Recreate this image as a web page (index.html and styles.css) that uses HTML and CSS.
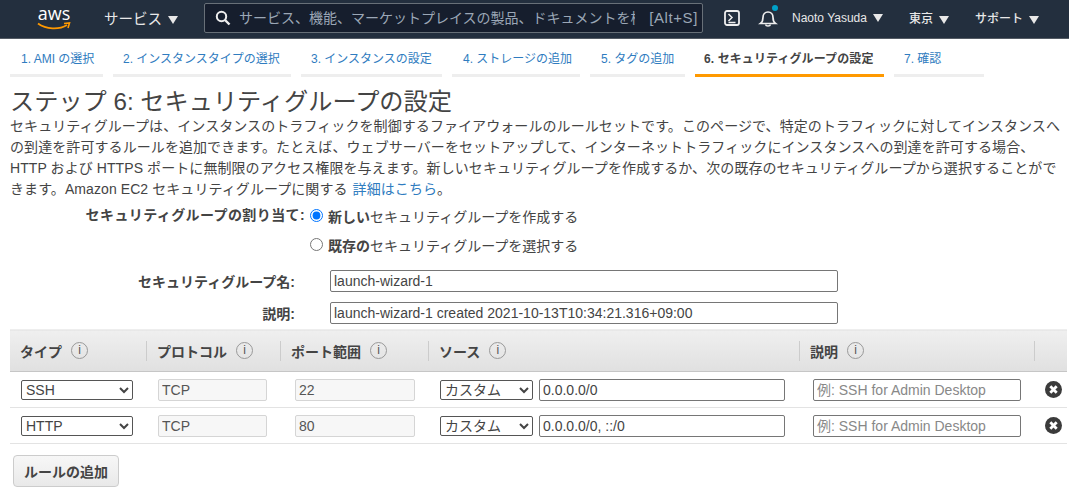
FILE: index.html
```html
<!DOCTYPE html>
<html lang="ja">
<head>
  <meta charset="UTF-8" />
  <title>ステップ 6: セキュリティグループの設定</title>
  <link rel="stylesheet" href="styles.css">
</head>
<body>
  <header class="topbar">
    <div class="logo">
      <span class="logo-text">aws</span>
      <svg class="logo-smile" width="34" height="9" viewBox="0 0 34 9"><path d="M1 1.500C9 7.500 22 8 30 3" fill="none" stroke="#f90" stroke-width="1.800"/><path d="M27 1.500L32.500 1L31 6" fill="none" stroke="#f90" stroke-width="1.600"/></svg>
    </div>
    <div class="nav-item services">サービス <span class="caret"></span></div>
    <div class="search">
      <svg width="16" height="16" viewBox="0 0 16 16"><circle cx="6.500" cy="6.500" r="4.700" fill="none" stroke="#eee" stroke-width="2"/><path d="M10 10l4.500 4.500" stroke="#eee" stroke-width="2.400"/></svg>
      <input class="search-input" type="text" placeholder="サービス、機能、マーケットプレイスの製品、ドキュメントを検索">
      <span class="search-key">[Alt+S]</span>
    </div>
    <svg class="icon-shell" width="16" height="16" viewBox="0 0 16 16"><rect x="1" y="1" width="14" height="14" rx="2" fill="none" stroke="#eee" stroke-width="1.800"/><path d="M4.500 4L8 7.500L4.500 11M4.500 12.500h7" fill="none" stroke="#eee" stroke-width="1.500"/></svg>
    <div class="bell">
      <svg width="20" height="20" viewBox="0 0 20 20"><path d="M2.500 15.500c2-1.500 2.500-3 2.500-6c0-3 2-5.500 5-5.500s5 2.500 5 5.500c0 3 .5 4.500 2.500 6z" fill="none" stroke="#eee" stroke-width="1.700"/><path d="M7.500 16.500c.5 2 4.500 2 5 0" fill="none" stroke="#eee" stroke-width="1.500"/></svg>
      <span class="bell-dot"></span>
    </div>
    <div class="nav-item small user">Naoto Yasuda <span class="caret"></span></div>
    <div class="nav-item small region">東京 <span class="caret"></span></div>
    <div class="nav-item small support">サポート <span class="caret"></span></div>
  </header>

  <nav class="tabs">
    <a class="tab t1">1. AMI の選択</a>
    <a class="tab t2">2. インスタンスタイプの選択</a>
    <a class="tab t3">3. インスタンスの設定</a>
    <a class="tab t4">4. ストレージの追加</a>
    <a class="tab t5">5. タグの追加</a>
    <a class="tab t6 active">6. セキュリティグループの設定</a>
    <a class="tab t7">7. 確認</a>
  </nav>

  <main class="content">
    <h1>ステップ 6: セキュリティグループの設定</h1>
    <p class="intro">セキュリティグループは、インスタンスのトラフィックを制御するファイアウォールのルールセットです。このページで、特定のトラフィックに対してインスタンスへの到達を許可するルールを追加できます。たとえば、ウェブサーバーをセットアップして、インターネットトラフィックにインスタンスへの到達を許可する場合、HTTP および HTTPS ポートに無制限のアクセス権限を与えます。新しいセキュリティグループを作成するか、次の既存のセキュリティグループから選択することができます。Amazon EC2 セキュリティグループに関する <a href="#">詳細はこちら</a>。</p>

    <div class="assign">
      <div class="assign-label">セキュリティグループの割り当て:</div>
      <div class="assign-options">
        <label class="radio"><input type="radio" name="sg" checked> <span><b>新しい</b>セキュリティグループを作成する</span></label>
        <label class="radio"><input type="radio" name="sg"> <span><b>既存の</b>セキュリティグループを選択する</span></label>
      </div>
    </div>

    <div class="field first">
      <label class="field-label">セキュリティグループ名:</label>
      <input class="text wide" type="text" value="launch-wizard-1">
    </div>
    <div class="field last">
      <label class="field-label">説明:</label>
      <input class="text wide" type="text" value="launch-wizard-1 created 2021-10-13T10:34:21.316+09:00">
    </div>

    <table class="rules">
      <thead>
        <tr>
          <th class="c-type"><span class="th-in">タイプ <i class="info">i</i></span></th>
          <th class="c-proto"><span class="th-in">プロトコル <i class="info">i</i></span></th>
          <th class="c-port"><span class="th-in">ポート範囲 <i class="info">i</i></span></th>
          <th class="c-source"><span class="th-in">ソース <i class="info">i</i></span></th>
          <th class="c-desc"><span class="th-in">説明 <i class="info">i</i></span></th>
          <th class="c-del"><span class="th-in"></span></th>
        </tr>
      </thead>
      <tbody>
        <tr>
          <td class="c-type"><select class="type-select"><option>SSH</option></select></td>
          <td class="c-proto"><input class="text ro proto" type="text" value="TCP" readonly></td>
          <td class="c-port"><input class="text ro port" type="text" value="22" readonly></td>
          <td class="c-source"><div class="source"><select class="source-select"><option>カスタム</option></select><input class="text cidr" type="text" value="0.0.0.0/0"></div></td>
          <td class="c-desc"><input class="text desc" type="text" placeholder="例: SSH for Admin Desktop"></td>
          <td class="c-del"><span class="del"><svg width="17" height="17" viewBox="0 0 17 17"><circle cx="8.500" cy="8.500" r="8.500" fill="#3b3b3b"/><path d="M5.300 5.300l6.400 6.400M11.700 5.300l-6.400 6.400" stroke="#fff" stroke-width="2.800"/></svg></span></td>
        </tr>
        <tr>
          <td class="c-type"><select class="type-select"><option>HTTP</option></select></td>
          <td class="c-proto"><input class="text ro proto" type="text" value="TCP" readonly></td>
          <td class="c-port"><input class="text ro port" type="text" value="80" readonly></td>
          <td class="c-source"><div class="source"><select class="source-select"><option>カスタム</option></select><input class="text cidr" type="text" value="0.0.0.0/0, ::/0"></div></td>
          <td class="c-desc"><input class="text desc" type="text" placeholder="例: SSH for Admin Desktop"></td>
          <td class="c-del"><span class="del"><svg width="17" height="17" viewBox="0 0 17 17"><circle cx="8.500" cy="8.500" r="8.500" fill="#3b3b3b"/><path d="M5.300 5.300l6.400 6.400M11.700 5.300l-6.400 6.400" stroke="#fff" stroke-width="2.800"/></svg></span></td>
        </tr>
      </tbody>
    </table>

    <button class="add-rule">ルールの追加</button>
  </main>
</body>
</html>
```
FILE: styles.css
```css
* {
  box-sizing: border-box;
}

body {
  font-family: "Liberation Sans", "Noto Sans CJK JP", sans-serif;
  font-size: 14px;
  color: #444;
  margin: 0;
  background: #fff;
  overflow: hidden;
}

/* top bar */
.topbar {
  display: flex;
  align-items: center;
  height: 39px;
  padding-bottom: 3px;
  background: #232f3e;
  border-bottom: 1px solid #545b64;
  color: #eee;
}

.logo {
  width: 34px;
  margin-left: 37px;
  height: 30px;
  display: flex;
  flex-direction: column;
  align-items: center;
}

.logo-text {
  font-family: "Open Sans", sans-serif;
  font-size: 18px;
  line-height: 20px;
  color: #fff;
}

.logo-smile {
  margin-top: -1px;
  flex: none;
}

.nav-item {
  white-space: nowrap;
  color: #e8e8e8;
}

.services {
  font-size: 14.500px;
  margin-left: 33px;
  width: 100px;
}

.small {
  font-size: 12px;
  font-weight: 500;
}

.caret {
  display: inline-block;
  width: 0;
  height: 0;
  margin-left: 3px;
  border-left: 5px solid transparent;
  border-right: 5px solid transparent;
  border-top: 8px solid #e8e8e8;
  vertical-align: middle;
}

.services .caret {
  margin-left: 2px;
}

.search {
  display: flex;
  align-items: center;
  width: 499px;
  height: 30px;
  background: #161e2d;
  border: 1px solid #687078;
  border-radius: 2px;
  padding: 0 4px 0 10px;
}

.search-input {
  flex: 1;
  min-width: 0;
  margin-left: 8px;
  padding: 0;
  border: none;
  outline: none;
  background: transparent;
  font: 14px "Liberation Sans", "Noto Sans CJK JP", sans-serif;
}

.search-input::placeholder {
  color: #9ba7b6;
  opacity: 1;
}

.search-key {
  margin-left: 14px;
  color: #9ba7b6;
  font-size: 15px;
  letter-spacing: .6px;
}

.icon-shell {
  margin-left: 21px;
  flex: none;
}

.bell {
  position: relative;
  margin-left: 18px;
  width: 20px;
  height: 20px;
}

.bell-dot {
  position: absolute;
  top: -3px;
  right: 0;
  width: 6px;
  height: 6px;
  border-radius: 50%;
  background: #00a1c9;
}

.user {
  margin-left: 14px;
  width: 117px;
}

.region {
  width: 66px;
}

.support {
  flex: none;
}

/* wizard tabs */
.tabs {
  display: flex;
  padding-left: 10px;
  height: 38px;
  gap: 10px;
}

.tab {
  display: block;
  height: 38px;
  padding-top: 11px;
  border-bottom: 3px solid #eee;
  font-size: 12px;
  line-height: 19px;
  color: #2f7cc0;
  padding-left: 11px;
  white-space: nowrap;
}

.tab.active {
  color: #444;
  font-weight: 700;
  border-bottom-color: #f90;
  padding-left: 9px;
  letter-spacing: .1px;
}

.t1 { width: 93px; }
.t2 { width: 178px; padding-left: 10px; }
.t3 { width: 141px; padding-left: 10px; }
.t4 { width: 128px; }
.t5 { width: 95px; }
.t6 { width: 189px; }
.t7 { width: 90px; padding-left: 10px; }

/* step content */
.content {
  padding: 0 2px 0 10px;
}

h1 {
  font-size: 24.200px;
  font-weight: 400;
  line-height: 29px;
  margin: 10px 0 0;
  color: #444;
}

.intro {
  margin: 0;
  line-height: 21px;
  font-size: 14px;
  letter-spacing: .08px;
  width: 1056px;
}

.intro a {
  color: #2f7cc0;
  text-decoration: none;
  margin-left: 1px;
}

.assign {
  display: flex;
  margin-top: 1px;
}

.assign-label {
  width: 295px;
  text-align: right;
  font-weight: 700;
  letter-spacing: .4px;
  padding-top: 3px;
}

.assign-options {
  margin-left: 5px;
}

.radio {
  display: flex;
  align-items: center;
  height: 29px;
}

.radio input {
  margin: 0 5px 0 0;
  width: 13px;
  height: 13px;
}

.field {
  display: flex;
  align-items: center;
  margin-bottom: 10px;
}

.field.first {
  margin-top: 11px;
}

.field.last {
  margin-bottom: 5px;
}

.field-label {
  width: 285px;
  text-align: right;
  font-weight: 700;
  margin-right: 35px;
}

.text {
  height: 22px;
  border: 1px solid #767676;
  border-radius: 2px;
  padding: 0 3px;
  font: 14px "Liberation Sans", "Noto Sans CJK JP", sans-serif;
  color: #444;
  background: #fff;
}

.wide {
  width: 508px;
}

/* rules table */
.rules {
  border-collapse: collapse;
  table-layout: fixed;
  width: 1057px;
  margin-top: 1px;
}

.rules th {
  height: 42px;
  padding: 0;
  text-align: left;
  font-weight: 700;
  background: linear-gradient(#efefef, #e0e0e0);
  border-bottom: 1px solid #c6c6c6;
  border-top: 1px solid #eee;
}

.th-in {
  display: flex;
  align-items: center;
  height: 20px;
  border-left: 1px solid #ccc;
  padding-left: 10px;
  gap: 9px;
}

.c-type .th-in {
  border-left: none;
}

.info {
  display: inline-block;
  width: 17px;
  height: 17px;
  border: 1px solid #999;
  border-radius: 50%;
  font-style: normal;
  font-weight: 400;
  font-size: 12px;
  line-height: 15px;
  text-align: center;
  color: #555;
}

.c-type { width: 136px; }
.c-proto { width: 134px; }
.c-port { width: 148px; }
.c-source { width: 371px; }
.c-desc { width: 235px; }
.c-del { width: 33px; }

.rules td {
  height: 36px;
  padding: 0;
  border-bottom: 1px solid #e3e3e3;
}

.rules td.c-type { padding-left: 11px; }
.rules td.c-proto { padding-left: 12px; }
.rules td.c-port { padding-left: 15px; }
.rules td.c-source { padding-left: 12px; }
.rules td.c-desc { padding-left: 14px; }
.rules td.c-del { padding-left: 11px; }

.type-select,
.source-select {
  height: 20px;
  border: 1px solid #555;
  border-radius: 2px;
  font: 14px "Liberation Sans", "Noto Sans CJK JP", sans-serif;
  color: #444;
  background: #fff;
}

.type-select {
  width: 112px;
}

.source {
  display: flex;
  align-items: center;
  gap: 6px;
}

.source-select {
  width: 93px;
}

.ro {
  background: #f7f7f7;
  border-color: #d5d5d5;
  color: #555;
}

.proto { width: 109px; }
.port { width: 120px; }
.cidr { width: 246px; }
.desc { width: 208px; }

.desc::placeholder {
  color: #888;
}

.del {
  display: block;
  height: 17px;
}

.add-rule {
  display: block;
  margin: 11px 0 0 3px;
  width: 106px;
  height: 32px;
  background: linear-gradient(#f7f7f7, #e9e9e9);
  border: 1px solid #ccc;
  border-radius: 4px;
  font: 700 14px "Liberation Sans", "Noto Sans CJK JP", sans-serif;
  color: #444;
}
```
